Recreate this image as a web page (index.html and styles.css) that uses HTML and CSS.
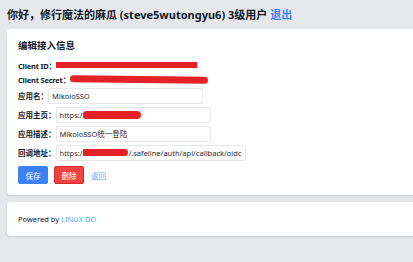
FILE: index.html
```html
<!DOCTYPE html>
<html lang="zh-CN">

<head>
    <meta charset="utf-8">
    <title>编辑接入信息</title>
    <link rel="stylesheet" href="styles.css">
</head>

<body>
    <div class="page">
        <h1 class="hello">你好，修行魔法的麻瓜 (steve5wutongyu6) 3级用户 <a class="logout" href="#">退出</a></h1>

        <div class="card">
            <h2 class="title">编辑接入信息</h2>

            <div class="row info">
                <span class="label">Client ID：</span>
                <span class="mark mark-id"></span>
            </div>
            <div class="row info">
                <span class="label">Client Secret：</span>
                <span class="mark mark-secret"></span>
            </div>

            <div class="row">
                <span class="label">应用名：</span>
                <div class="field w-short">MikoloSSO</div>
            </div>
            <div class="row">
                <span class="label">应用主页：</span>
                <div class="field w-short">https:/<span class="mark mark-home"></span></div>
            </div>
            <div class="row">
                <span class="label">应用描述：</span>
                <div class="field w-short">MikoloSSO统一登陆</div>
            </div>
            <div class="row">
                <span class="label">回调地址：</span>
                <div class="field w-long">https:/<span class="mark mark-cb"></span>/.safeline/auth/api/callback/oidc</div>
            </div>

            <div class="actions">
                <button class="btn btn-save">保存</button>
                <button class="btn btn-delete">删除</button>
                <a class="back" href="#">返回</a>
            </div>
        </div>

        <div class="card footer">
            Powered by <a class="brand" href="#">LINUX DO</a>
        </div>
    </div>
</body>

</html>
```

FILE: styles.css
```css
*,
*:before,
*:after {
    padding: 0;
    margin: 0;
    box-sizing: border-box;
}

body {
    height: 100vh;
    overflow: hidden;
    background: #e5e7eb;
    font-family: "Noto Sans", "Noto Sans CJK SC", sans-serif;
    color: #111827;
}

a {
    text-decoration: none;
}

.page {
    width: 440px;
    padding: 8px 7px;
}

.hello {
    font-size: 11px;
    line-height: 14px;
    font-weight: 700;
}

.logout {
    color: #3b82f6;
}

.card {
    margin-top: 7px;
    background: #fff;
    border-radius: 4px;
    box-shadow: 0 1px 2px rgba(0, 0, 0, 0.12);
    padding: 11px 11px 11px;
}

.title {
    font-size: 9.5px;
    line-height: 12px;
    font-weight: 700;
    margin-bottom: 6px;
}

.row {
    display: flex;
    align-items: center;
    height: 19px;
    font-size: 7.5px;
}

.row.info {
    height: 14px;
}

.row.info .label {
    letter-spacing: -0.2px;
}

.label {
    font-weight: 700;
    white-space: nowrap;
}

.field {
    height: 16px;
    display: flex;
    align-items: center;
    padding: 0 3px;
    border: 1px solid #e5e7eb;
    border-radius: 2px;
    white-space: nowrap;
    color: #1f2937;
}

.w-short {
    width: 155px;
}

.w-long {
    width: 190px;
}

.mark {
    display: inline-block;
    background: #e62125;
}

.mark-id {
    width: 141px;
    height: 6px;
}

.mark-secret {
    width: 138px;
    height: 7px;
    border-radius: 4px;
    transform: rotate(0.6deg);
}

.mark-home {
    width: 58px;
    height: 8px;
    border-radius: 4px 5px 5px 3px;
}

.mark-cb {
    width: 51px;
    height: 7px;
    border-radius: 1px 4px 4px 1px;
}

.actions {
    display: flex;
    align-items: center;
    gap: 6px;
    margin-top: 4px;
}

.btn {
    width: 30px;
    height: 18px;
    border: 1px solid transparent;
    border-radius: 2px;
    color: #fff;
    font-family: inherit;
    font-size: 7.5px;
}

.btn-save {
    background: #3b82f6;
}

.btn-delete {
    background: #ef4444;
    border-color: #dc2626;
}

.back {
    margin-left: 1px;
    font-size: 7.5px;
    color: #60a5fa;
}

.footer {
    padding: 13px 11px;
    font-size: 7.5px;
    line-height: 8px;
    box-shadow: 0 1px 2px rgba(0, 0, 0, 0.12);
}

.brand {
    color: #60a5fa;
}
```
